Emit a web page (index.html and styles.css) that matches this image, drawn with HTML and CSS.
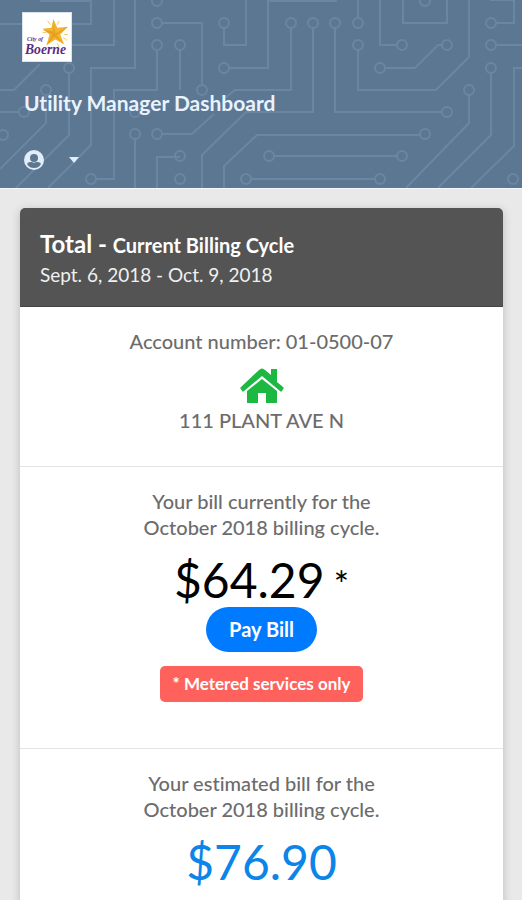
FILE: index.html
```html
<!DOCTYPE html>
<html lang="en">

<head>
  <meta charset="UTF-8">
  <meta name="viewport" content="width=device-width, initial-scale=1.0">
  <title>Utility Manager Dashboard</title>
  <link rel="stylesheet" href="styles.css">
</head>

<body>
  <header class="header">
    <svg class="circuit" viewBox="0 0 522 188" preserveAspectRatio="xMidYMin slice" aria-hidden="true">
      <path d="M69 73V135L15 189M46 95V123L0 169M157 50V90H114V179H96M135 0V68H91V145L48 188M135 139V189M114 0V45H72M0 24H23M91 0V24H72M40 1H91M0 90H14L40 64M0 112H19M162 134H192L214 114M180 157H157V189M224 28V45H246V0M162 23H202V85M180 50V90M229 68H268V0M268 1H337M291 28V90H235L225 98M313 28V112H246L202 155V189M335 28V112H442M224 189V166L257 135H420M274 156H397M251 179H375M358 0V18M380 0V45H397M403 0V23H447V0M469 0V57L436 90H358V50M385 68H415L438 45H442M496 23H514V0H490M496 45H522M491 73V135L438 188M469 95V123L406 188M522 68H514V146L471 188" />
      <g>
        <circle cx="157" cy="1" r="5" /><circle cx="157" cy="23" r="5" /><circle cx="157" cy="45" r="5" />
        <circle cx="69" cy="68" r="5" /><circle cx="46" cy="90" r="5" /><circle cx="24" cy="112" r="5" />
        <circle cx="3" cy="135" r="5" /><circle cx="135" cy="134" r="5" /><circle cx="157" cy="134" r="5" />
        <circle cx="135" cy="112" r="5" /><circle cx="91" cy="179" r="5" /><circle cx="224" cy="23" r="5" />
        <circle cx="180" cy="45" r="5" /><circle cx="202" cy="90" r="5" /><circle cx="224" cy="68" r="5" />
        <circle cx="180" cy="156" r="5" /><circle cx="180" cy="179" r="5" /><circle cx="269" cy="156" r="5" />
        <circle cx="246" cy="179" r="5" /><circle cx="291" cy="23" r="5" /><circle cx="313" cy="23" r="5" />
        <circle cx="335" cy="23" r="5" /><circle cx="358" cy="23" r="5" /><circle cx="358" cy="45" r="5" />
        <circle cx="402" cy="45" r="5" /><circle cx="380" cy="68" r="5" /><circle cx="425" cy="1" r="5" />
        <circle cx="447" cy="45" r="5" /><circle cx="491" cy="23" r="5" /><circle cx="491" cy="45" r="5" />
        <circle cx="491" cy="68" r="5" /><circle cx="469" cy="90" r="5" /><circle cx="447" cy="112" r="5" />
        <circle cx="425" cy="134" r="5" /><circle cx="402" cy="156" r="5" /><circle cx="380" cy="179" r="5" />
        <circle cx="513" cy="179" r="5" />
      </g>
    </svg>

    <a class="logo" href="#">
      <svg viewBox="0 0 49 49" role="img" aria-label="City of Boerne">
        <g stroke="#f6c665" stroke-width="1">
          <path d="M25 8l3 4M37 8l-2 4M44 15l-4 3M45 28l-4-3M37 35l-2-4M24 32l3-3M20 20h4M46 22h-4" />
        </g>
        <path d="M31 6l4 9 11-1-8 8 4 10-9-5-9 6 3-11-7-6 9-1z" fill="#f3b530" />
        <path d="M31 6l2 15 13-7-12 9 8 9-10-8-8 9 6-11-10-5 11 2z" fill="#e89f20" />
        <text class="logo-small" x="4" y="29">City of</text>
        <text class="logo-name" x="2" y="42">Boerne</text>
      </svg>
    </a>
    <h1 class="title">Utility Manager Dashboard</h1>
    <button class="user-button" type="button" aria-label="Account menu">
      <svg class="user-icon" viewBox="0 0 20 20">
        <circle cx="10" cy="10" r="10" />
        <circle class="cut" cx="10" cy="8" r="4" />
        <path class="cut" d="M3 14c1-2 3-2 5-2 1 1 3 1 4 0 2 0 4 0 5 2-2 3-4 4-7 4s-5-1-7-4z" />
      </svg>
      <svg class="caret" viewBox="0 0 10 6">
        <path d="M0 0h10L5 6z" />
      </svg>
    </button>
  </header>

  <main class="container">
    <div class="card">
      <div class="card-header">
        <h2 class="card-title">Total - <small>Current Billing Cycle</small></h2>
        <div class="period">Sept. 6, 2018 - Oct. 9, 2018</div>
      </div>

      <section class="account">
        <div>Account number: 01-0500-07</div>
        <svg class="home-icon" viewBox="0 0 44 36">
          <path d="M31 1h6v13l6 5c1 1 1 1 0 2l-1 2c-1 1-1 1-2 0L22 8 4 23c-1 1-1 1-2 0l-1-2c-1-1-1-1 0-2L19 2c2-2 4-2 6 0l6 5z" />
          <path d="M22 11l15 12v11c0 1 0 1-1 1H26V25h-8v10H8c-1 0-1 0-1-1V23z" />
        </svg>
        <div>111 PLANT AVE N</div>
      </section>

      <section class="bill">
        <p class="label">Your bill currently for the<br>October 2018 billing cycle.</p>
        <div class="amount">$64.29<span class="star"> *</span></div>
        <button class="pay-button" type="button">Pay Bill</button>
        <div class="notice">* Metered services only</div>
      </section>

      <section class="bill">
        <p class="label">Your estimated bill for the<br>October 2018 billing cycle.</p>
        <div class="amount estimated">$76.90</div>
      </section>
    </div>
  </main>
</body>

</html>
```
FILE: styles.css
```css
* {
  box-sizing: border-box;
}

html {
  scrollbar-width: none;
}

body {
  margin: 0;
  background-color: #e9e9e9;
  font-family: Lato, sans-serif;
  font-size: 20px;
  font-weight: 500;
  font-variant-ligatures: none;
  line-height: 26px;
  color: #6c6c6c;
}

.header {
  position: relative;
  padding: 12px 22px 15px;
  background-color: #5c7792;
  border-bottom: 1px solid #f4f7fb;
}

.circuit {
  position: absolute;
  top: 0;
  left: 0;
  width: 100%;
  height: 100%;
  fill: none;
  stroke: #6a86a2;
  stroke-width: 2;
}

.logo {
  position: relative;
  display: block;
  width: 50px;
  height: 50px;
  background-color: #fff;
  border: 1px solid #dbe2ea;
}

.logo svg {
  display: block;
  width: 100%;
}

.logo-small,
.logo-name {
  font-family: "Liberation Serif", serif;
  font-style: italic;
  font-weight: bold;
  fill: #5b2d84;
}

.logo-small {
  font-size: 6px;
}

.logo-name {
  font-size: 14px;
}

.title {
  position: relative;
  margin: 28px 2px 31px;
  font-size: 21px;
  font-weight: bold;
  color: #e8f3ff;
}

.user-button {
  position: relative;
  display: flex;
  align-items: center;
  gap: 25px;
  margin: 0 2px;
  padding: 3px 0;
  border: none;
  background: none;
  cursor: pointer;
}

.user-icon {
  width: 20px;
  height: 20px;
  fill: #e3edf7;
}

.user-icon .cut {
  fill: #5c7792;
}

.caret {
  width: 10px;
  height: 6px;
  fill: #e3edf7;
}

.container {
  padding: 19px 19px 20px 20px;
}

.card {
  overflow: hidden;
  background-color: #fff;
  border-radius: 5px;
  box-shadow: 0 2px 10px rgba(0, 0, 0, 0.2);
}

.card-header {
  padding: 20px 20px 18px;
  background-color: #545454;
  border-bottom: 1px solid #454545;
  color: #f0f0f0;
}

.card-title {
  margin: 0;
  font-size: 24px;
  line-height: 32px;
  color: #fff;
}

.card-title small {
  font-size: 20px;
}

.period {
  font-size: 19px;
  font-weight: normal;
  line-height: 27px;
}

.account,
.bill {
  padding: 21px 20px 33px;
  text-align: center;
}

.bill {
  padding-bottom: 46px;
  border-top: 1px solid #e4e4e4;
}

.home-icon {
  display: block;
  width: 44px;
  height: 36px;
  margin: 14px auto 3px;
  fill: #1cb841;
}

.label {
  margin: 0;
}

.amount {
  margin-top: 17px;
  font-size: 48px;
  font-weight: normal;
  line-height: 46px;
  color: #000;
}

.star {
  font-size: 36px;
}

.estimated {
  color: #0c84e8;
}

.pay-button {
  display: block;
  margin: 0 auto 14px;
  padding: 9px 23px 10px;
  border: none;
  border-radius: 23px;
  background-color: #007bff;
  font-family: inherit;
  font-size: 20px;
  font-weight: bold;
  line-height: 26px;
  color: #fff;
  cursor: pointer;
}

.pay-button:hover {
  background-color: #0069d9;
}

.notice {
  display: inline-block;
  padding: 5px 13px;
  border-radius: 5px;
  background-color: #ff625c;
  font-size: 17px;
  font-weight: bold;
  color: #fff;
}
```
